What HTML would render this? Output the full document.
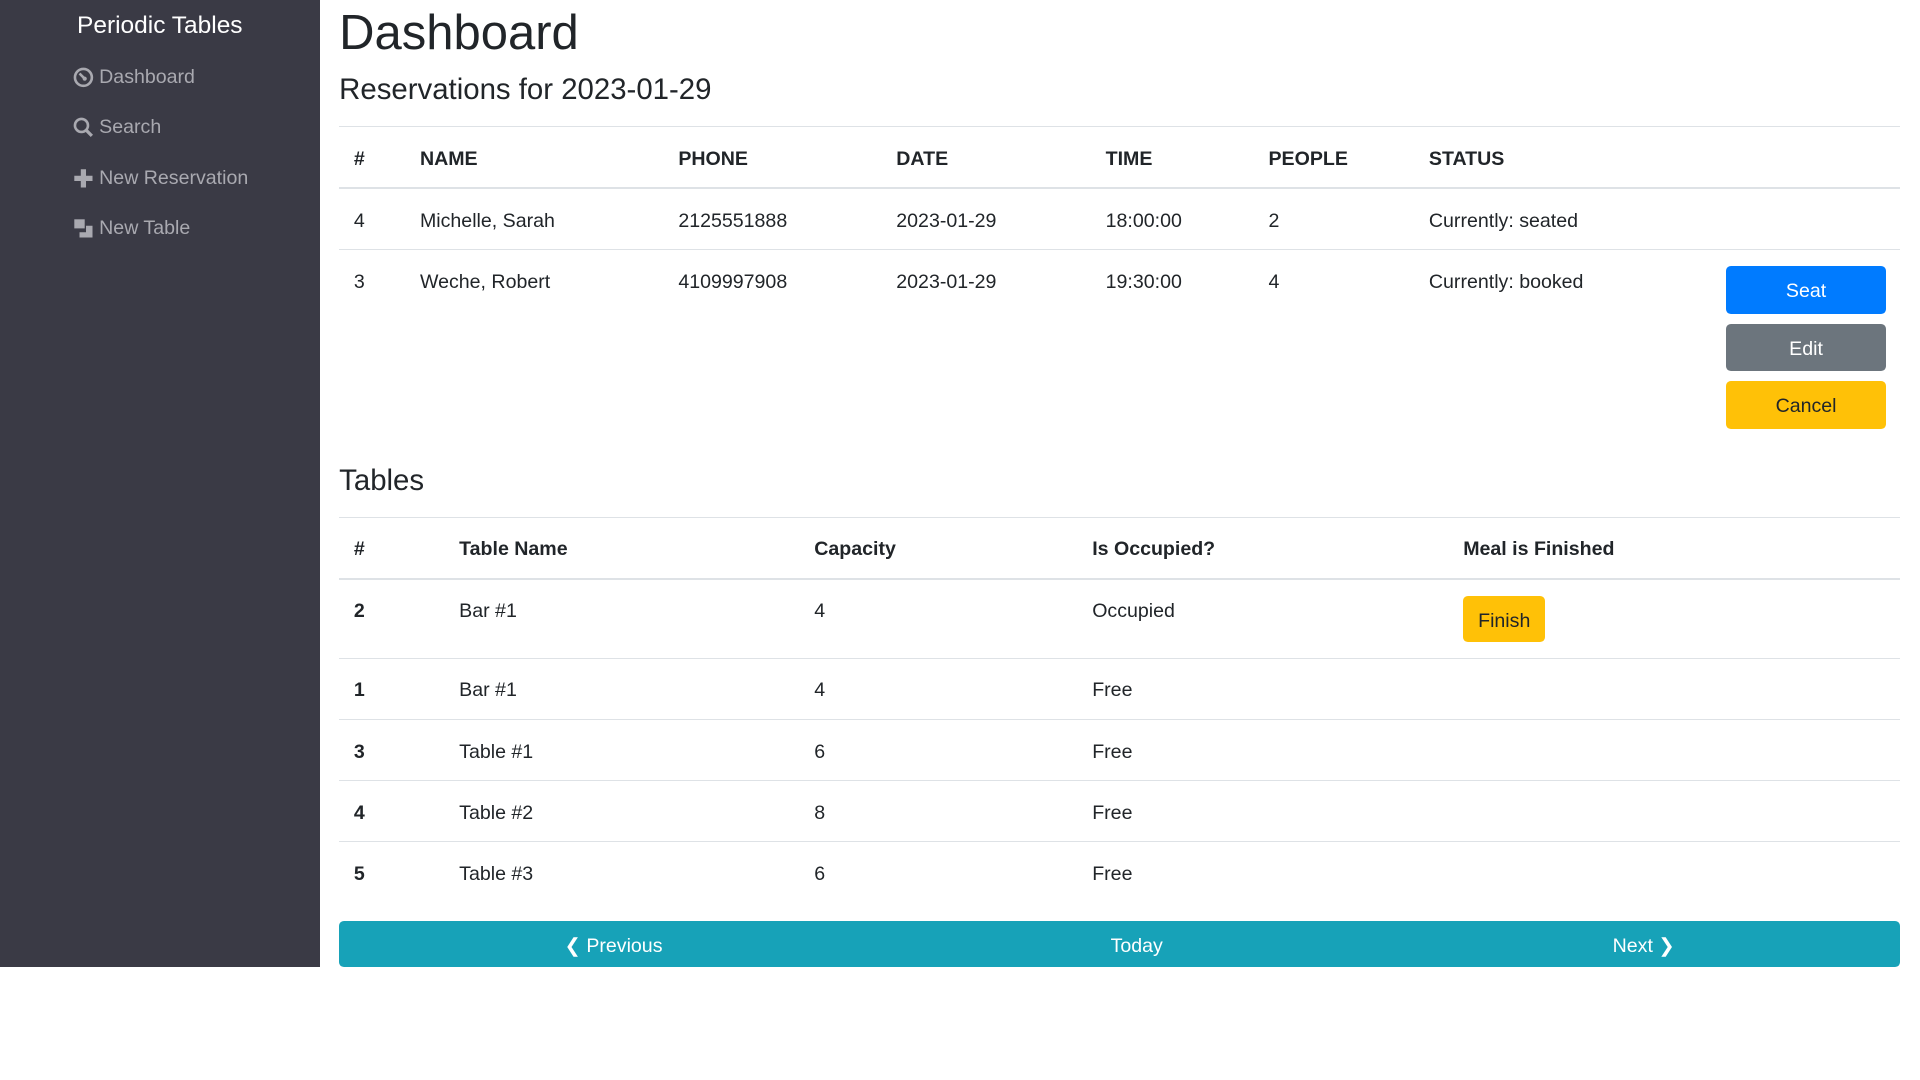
<!DOCTYPE html>
<html><head><meta charset="utf-8"><style>
html,body{margin:0;padding:0;background:#fff;}
body{width:1920px;height:1080px;overflow:hidden;font-family:"Liberation Sans",sans-serif;color:#212529;}
#w{zoom:1.2245;width:1568px;height:882px;position:relative;font-size:16px;}
#side{position:absolute;left:0;top:0;width:261px;height:790px;background:#3a3a45;}
#side .brand{position:absolute;top:10px;width:261px;text-align:center;color:#fff;font-size:20px;}
#side .it{position:absolute;left:60px;color:#a9a9b0;font-size:16px;display:flex;align-items:center;gap:4px;}
#main{position:absolute;left:277px;top:0;width:1275px;}
h1{margin:0;position:absolute;top:4px;font-size:40px;font-weight:500;}
h4{margin:0;position:absolute;font-size:24px;font-weight:500;}
table{position:absolute;left:0;width:1275px;border-collapse:collapse;table-layout:fixed;}
td,th{padding:3px 12px 0;text-align:left;vertical-align:top;border-top:1px solid #dee2e6;box-sizing:border-box;}
th{font-weight:bold;height:50px;line-height:46px;border-bottom:2px solid #dee2e6;}
td{height:50px;line-height:46px;}
.btn{display:block;border-radius:4px;text-align:center;height:39px;line-height:41px;font-size:16px;}
.nav{position:absolute;top:752px;left:0;width:1275px;height:38px;background:#17a2b8;border-radius:4px;color:#fff;}
.nav span{position:absolute;top:0;line-height:41px;}
</style></head><body><div id="w">
<div id="side">
<div class="brand">Periodic Tables</div>
<div class="it" style="top:54px"><svg width="17" height="17" viewBox="0 0 16 16"><circle cx="8" cy="8" r="6.5" fill="none" stroke="#a9a9b0" stroke-width="2"/><path d="M5 5l4 4" stroke="#a9a9b0" stroke-width="2"/><circle cx="9" cy="9" r="1.6" fill="#a9a9b0"/></svg>Dashboard</div>
<div class="it" style="top:95px"><svg width="17" height="17" viewBox="0 0 16 16"><circle cx="6.5" cy="6.5" r="5" fill="none" stroke="#a9a9b0" stroke-width="2"/><path d="M10 10l4.5 4.5" stroke="#a9a9b0" stroke-width="2.5"/></svg>Search</div>
<div class="it" style="top:136px"><svg width="17" height="17" viewBox="0 0 16 16"><path d="M8 1v14M1 8h14" stroke="#a9a9b0" stroke-width="4"/></svg>New Reservation</div>
<div class="it" style="top:177px"><svg width="17" height="17" viewBox="0 0 16 16"><rect x="1" y="1" width="8" height="7" fill="#a9a9b0"/><path d="M10 6v5H5v4h10V6z" fill="#a9a9b0"/></svg>New Table</div>
</div>
<div id="main">
<h1>Dashboard</h1>
<h4 style="top:60px">Reservations for 2023-01-29</h4>
<table style="top:103px">
<colgroup><col style="width:54px"><col style="width:211px"><col style="width:178px"><col style="width:171px"><col style="width:133px"><col style="width:131px"><col style="width:243px"><col></colgroup>
<tr><th>#</th><th>NAME</th><th>PHONE</th><th>DATE</th><th>TIME</th><th>PEOPLE</th><th>STATUS</th><th></th></tr>
<tr><td>4</td><td>Michelle, Sarah</td><td>2125551888</td><td>2023-01-29</td><td>18:00:00</td><td>2</td><td>Currently: seated</td><td></td></tr>
<tr><td style="height:152px">3</td><td>Weche, Robert</td><td>4109997908</td><td>2023-01-29</td><td>19:30:00</td><td>4</td><td>Currently: booked</td><td style="padding-top:13px">
<span class="btn" style="background:#007bff;color:#fff;width:130px;margin-bottom:8px">Seat</span>
<span class="btn" style="background:#6c757d;color:#fff;width:130px;margin-bottom:8px">Edit</span>
<span class="btn" style="background:#ffc107;color:#212529;width:130px">Cancel</span></td></tr>
</table>
<h4 style="top:379px">Tables</h4>
<table style="top:422px">
<colgroup><col style="width:86px"><col style="width:290px"><col style="width:227px"><col style="width:303px"><col></colgroup>
<tr><th>#</th><th>Table Name</th><th>Capacity</th><th>Is Occupied?</th><th>Meal is Finished</th></tr>
<tr><td style="height:65px"><b>2</b></td><td>Bar #1</td><td>4</td><td>Occupied</td><td style="padding-top:13px"><span class="btn" style="background:#ffc107;width:67px;height:38px">Finish</span></td></tr>
<tr><td><b>1</b></td><td>Bar #1</td><td>4</td><td>Free</td><td></td></tr>
<tr><td><b>3</b></td><td>Table #1</td><td>6</td><td>Free</td><td></td></tr>
<tr><td><b>4</b></td><td>Table #2</td><td>8</td><td>Free</td><td></td></tr>
<tr><td><b>5</b></td><td>Table #3</td><td>6</td><td>Free</td><td></td></tr>
</table>
<div class="nav"><span style="left:184px">&#10094; Previous</span><span style="left:630px">Today</span><span style="left:1040px">Next &#10095;</span></div>
</div>
</div></body></html>
